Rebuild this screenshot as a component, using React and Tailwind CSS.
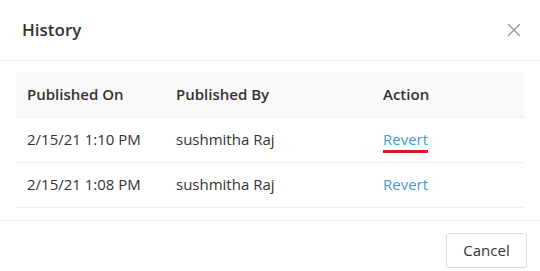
const rows = [
  { on: "2/15/21 1:10 PM", by: "sushmitha Raj", active: true },
  { on: "2/15/21 1:08 PM", by: "sushmitha Raj", active: false },
]

const App = () => {
  return (
    <div className="w-[540px] h-[271px] bg-white text-[#333] font-['Open_Sans',sans-serif] flex flex-col">
      {/* header */}
      <div className="h-[61px] flex items-center justify-between pl-[22px] pr-[18px] border-b border-[#efefef]">
        <h2 className="text-[17px] font-semibold">History</h2>
        <button className="w-[16px] h-[16px] flex items-center justify-center text-[#9a9a9a]">
          <svg width="14" height="14" viewBox="0 0 14 14" fill="none" stroke="currentColor" strokeWidth="1.4">
            <path d="M1 1L13 13M13 1L1 13" />
          </svg>
        </button>
      </div>

      {/* table */}
      <div className="px-[16px] pt-[11px] h-[159px]">
        <table className="w-full text-[15px] border-collapse">
          <thead>
            <tr className="bg-[#f9f9f9] h-[45px] text-left">
              <th className="w-[149px] pl-[11px] font-semibold">Published On</th>
              <th className="w-[207px] pl-[11px] font-semibold">Published By</th>
              <th className="pl-[11px] font-semibold">Action</th>
            </tr>
          </thead>
          <tbody>
            {rows.map((r, i) => (
              <tr key={i} className="h-[45px] border-t border-[#f0f0f0] last:border-b">
                <td className="pl-[11px]">{r.on}</td>
                <td className="pl-[11px]">{r.by}</td>
                <td className="pl-[11px]">
                  <a className={"text-[#4b98d4] pb-[1px] " + (r.active ? "border-b-[3px] border-[#e0161e]" : "border-b-[3px] border-transparent")}>
                    Revert
                  </a>
                </td>
              </tr>
            ))}
          </tbody>
        </table>
      </div>

      {/* footer */}
      <div className="flex-1 border-t border-[#efefef] flex items-start justify-end pr-[13px] pt-[12px]">
        <button className="h-[35px] w-[81px] rounded-[3px] border border-[#dcdcdc] text-[15px] text-[#333] bg-white">
          Cancel
        </button>
      </div>
    </div>
  )
}

export default App
